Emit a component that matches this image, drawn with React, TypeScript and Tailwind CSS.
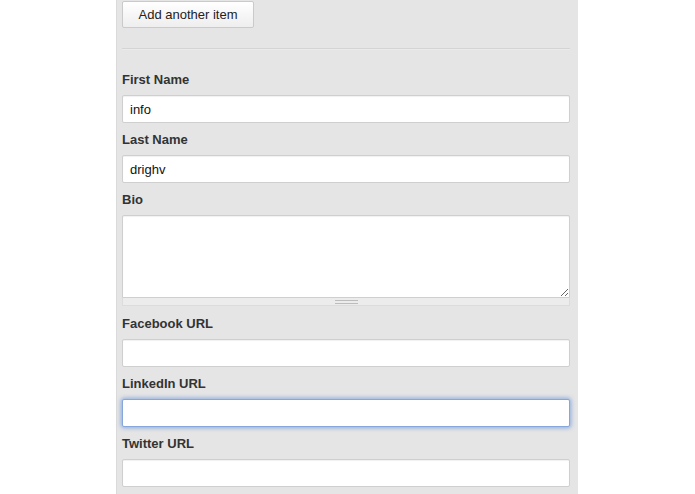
import React from 'react';

const labelCls = 'mb-[7px] block h-[16px] text-[13px] leading-[16px] font-bold text-[#333]';

const Field = ({ label, value, focused }: { label: string; value?: string; focused?: boolean }) => (
  <div className="pt-[9px]">
    <label className={labelCls}>{label}</label>
    <input
      type="text"
      defaultValue={value}
      className={`block h-[28px] w-full rounded-[2px] border bg-white px-[7px] text-[13px] text-[#111] outline-none ${
        focused
          ? 'border-[#86a6dc] shadow-[0_0_4px_1px_rgba(100,145,220,0.7)]'
          : 'border-[#cfcfcf] shadow-[inset_0_1px_1px_rgba(0,0,0,0.06)]'
      }`}
    />
  </div>
);

const App = () => {
  return (
    <div className="h-[494px] w-[695px] overflow-hidden bg-white" style={{ fontFamily: '"Liberation Sans", Arial, sans-serif' }}>
      <div className="ml-[116px] h-full w-[462px] border-l border-[#dadada] bg-[#e5e5e5] pl-[5px] pr-[8px]">
        <div className="pt-[1px]">
          <button className="block h-[27px] w-[132px] rounded-[2px] border border-[#cacaca] bg-gradient-to-b from-white to-[#eeeeee] text-[13px] text-[#222]">
            Add another item
          </button>
        </div>

        <div className="mt-[20px] border-t border-b border-t-[#d4d4d4] border-b-[#ebebeb]" />

        <div className="pt-[13px]">
          <Field label="First Name" value="info" />
        </div>
        <Field label="Last Name" value="drighv" />

        <div className="pt-[9px]">
          <label className={labelCls}>Bio</label>
          <textarea className="block h-[83px] w-full resize-y rounded-t-[2px] border border-[#cfcfcf] bg-white px-[7px] text-[13px] outline-none shadow-[inset_0_1px_1px_rgba(0,0,0,0.06)]" />
          <div className="flex h-[8px] items-center justify-center border border-t-0 border-[#dcdcdc] bg-[#ececec]">
            <div className="h-[4px] w-[23px] border-t border-b border-[#bcbcbc]" />
          </div>
        </div>

        <div className="pt-[1px]">
          <Field label="Facebook URL" />
        </div>
        <Field label="LinkedIn URL" focused />
        <Field label="Twitter URL" />
      </div>
    </div>
  );
};

export default App;
